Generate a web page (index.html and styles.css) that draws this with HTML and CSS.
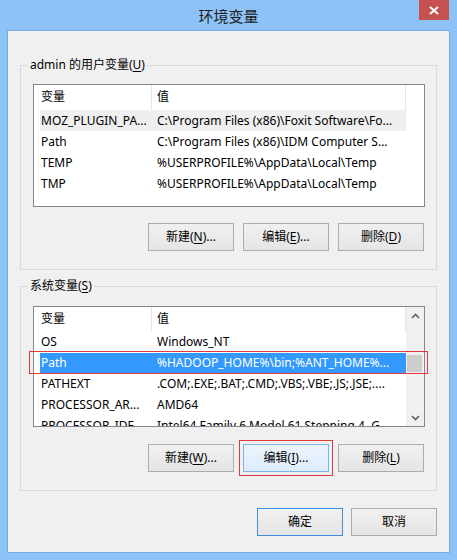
FILE: index.html
```html
<!DOCTYPE html>
<html lang="zh-CN">
<head>
<meta charset="utf-8">
<title>环境变量</title>
<link rel="stylesheet" href="styles.css">
</head>
<body>
<div class="window">
  <div class="titlebar">
    <span class="spacer"></span>
    <span class="title">环境变量</span>
    <span class="tb-right">
      <span class="close"><svg width="10" height="9" viewBox="0 0 10 9"><path d="M1 1 L9 8 M9 1 L1 8" stroke="#fff" stroke-width="2" fill="none"/></svg></span>
    </span>
  </div>
  <div class="client">
    <fieldset class="group">
      <legend>admin 的用户变量(<u>U</u>)</legend>
      <div class="listview lv-user">
        <div class="lv-main">
          <div class="lv-header">
            <div class="h1">变量</div>
            <div class="h2">值</div>
            <div class="hfill"></div>
          </div>
          <div class="lv-body">
            <div class="row hot"><span class="c1">MOZ_PLUGIN_PA...</span><span class="c2">C:\Program Files (x86)\Foxit Software\Fo...</span></div>
            <div class="row"><span class="c1">Path</span><span class="c2">C:\Program Files (x86)\IDM Computer S...</span></div>
            <div class="row"><span class="c1">TEMP</span><span class="c2">%USERPROFILE%\AppData\Local\Temp</span></div>
            <div class="row"><span class="c1">TMP</span><span class="c2">%USERPROFILE%\AppData\Local\Temp</span></div>
          </div>
        </div>
      </div>
      <div class="btnrow">
        <button class="btn">新建(<u>N</u>)...</button>
        <button class="btn">编辑(<u>E</u>)...</button>
        <button class="btn">删除(<u>D</u>)</button>
      </div>
    </fieldset>

    <fieldset class="group group-sys">
      <legend>系统变量(<u>S</u>)</legend>
      <div class="listview lv-sys">
        <div class="lv-main">
          <div class="lv-header">
            <div class="h1">变量</div>
            <div class="h2">值</div>
          </div>
          <div class="lv-body">
            <div class="row"><span class="c1">OS</span><span class="c2">Windows_NT</span></div>
            <div class="row selected"><span class="c1">Path</span><span class="c2">%HADOOP_HOME%\bin;%ANT_HOME%...</span></div>
            <div class="row"><span class="c1">PATHEXT</span><span class="c2">.COM;.EXE;.BAT;.CMD;.VBS;.VBE;.JS;.JSE;....</span></div>
            <div class="row"><span class="c1">PROCESSOR_AR...</span><span class="c2">AMD64</span></div>
            <div class="row"><span class="c1">PROCESSOR_IDE...</span><span class="c2">Intel64 Family 6 Model 61 Stepping 4, G...</span></div>
          </div>
        </div>
        <div class="scrollbar">
          <div class="sb-btn"><svg width="9" height="6" viewBox="0 0 9 6"><path d="M1 5 L4.5 1.5 L8 5" stroke="#606060" stroke-width="1.6" fill="none"/></svg></div>
          <div class="sb-track"><div class="sb-thumb"></div></div>
          <div class="sb-btn"><svg width="9" height="6" viewBox="0 0 9 6"><path d="M1 1 L4.5 4.5 L8 1" stroke="#606060" stroke-width="1.6" fill="none"/></svg></div>
        </div>
      </div>
      <div class="btnrow">
        <button class="btn">新建(<u>W</u>)...</button>
        <button class="btn btn-hot marked">编辑(<u>I</u>)...</button>
        <button class="btn">删除(<u>L</u>)</button>
      </div>
      <div class="mark-row"></div>
    </fieldset>

    <div class="dlg-buttons">
      <button class="btn btn-default">确定</button>
      <button class="btn">取消</button>
    </div>
  </div>
</div>
</body>
</html>
```

FILE: styles.css
```css
* { box-sizing: border-box; }
html, body { margin: 0; padding: 0; }
body {
  width: 457px;
  height: 560px;
  overflow: hidden;
  font-family: "Noto Sans", "Noto Sans CJK SC", sans-serif;
  font-size: 12px;
  color: #000;
}
.window {
  width: 457px;
  height: 560px;
  background: #8cc2f5;
  padding: 0 7px;
  display: flex;
  flex-direction: column;
}
.titlebar {
  height: 30px;
  display: grid;
  grid-template-columns: 1fr auto 1fr;
  margin: 0 -7px;
}
.title {
  font-family: "Noto Sans CJK SC", sans-serif;
  font-size: 15px;
  line-height: 31px;
  color: #1e1e1e;
}
.tb-right {
  display: flex;
  justify-content: flex-end;
  align-items: flex-start;
  padding-right: 8px;
}
.close {
  width: 30px;
  height: 20px;
  background: #c75050;
  display: flex;
  align-items: center;
  justify-content: center;
}
.client {
  width: 443px;
  height: 523px;
  border: 1px solid #74abe3;
  background: #f0f0f0;
  display: flex;
  flex-direction: column;
}
.group {
  position: relative;
  margin: 26px 0 0 12px;
  width: 417px;
  min-width: 0;
  border: 1px solid #d9d9d9;
  padding: 0 11px 18px 7px;
}
.group-sys { margin-top: 8px; }
.group legend {
  padding: 0 2px;
  line-height: 16px;
  font-size: 12px;
}
u { text-decoration: underline; text-underline-offset: 2px; }
.listview {
  margin: 11px 0 0 5px;
  width: 392px;
  height: 123px;
  border: 1px solid #828790;
  background: #fff;
  display: flex;
}
.lv-sys { margin-top: 12px; height: 121px; }
.lv-main {
  flex: 1;
  min-width: 0;
  display: flex;
  flex-direction: column;
  overflow: hidden;
}
.lv-header {
  height: 25px;
  flex: none;
  display: flex;
  line-height: 24px;
}
.lv-sys .lv-header { height: 24px; }
.h1 {
  width: 118px;
  padding-left: 7px;
  border-right: 1px solid #e5e5e5;
}
.h2 {
  width: 254px;
  padding-left: 5px;
  border-right: 1px solid #e5e5e5;
}
.hfill { flex: 1; }
.lv-body {
  flex: 1;
  overflow: hidden;
}
.row {
  margin-left: 6px;
  width: 366px;
  height: 21px;
  line-height: 21px;
  display: flex;
  white-space: nowrap;
}
.row .c1 {
  width: 112px;
  padding-left: 1px;
  overflow: hidden;
}
.row .c2 {
  width: 254px;
  padding-left: 5px;
  overflow: hidden;
}
.row.hot { background: #efefef; }
.row.selected {
  background: linear-gradient(#3399ff, #3399ff) 0 1px / 100% 20px no-repeat;
  color: #fff;
}
.scrollbar {
  width: 18px;
  flex: none;
  background: #f0f0f0;
  display: flex;
  flex-direction: column;
}
.sb-btn {
  height: 17px;
  display: flex;
  align-items: center;
  justify-content: center;
}
.sb-track { flex: 1; }
.sb-thumb {
  margin: 31px 0 0 1px;
  width: 15px;
  height: 17px;
  background: #cdcdcd;
}
/* annotation rectangle over the selected Path row */
.mark-row {
  position: absolute;
  z-index: 3;
  left: 8px;
  top: 57px;
  width: 399px;
  height: 23px;
  border: 1px solid #e0393b;
  pointer-events: none;
}
.btnrow {
  margin-top: 16px;
  display: flex;
  justify-content: flex-end;
  gap: 9px;
  padding-right: 1px;
}
.group-sys .btnrow { margin-top: 17px; }
.btn {
  width: 86px;
  height: 28px;
  border: 1px solid #acacac;
  background: linear-gradient(#f0f0f0, #e5e5e5);
  font-family: "Noto Sans", "Noto Sans CJK SC", sans-serif;
  font-size: 12px;
  color: #000;
  padding: 0;
  margin: 0;
  line-height: 26px;
}
.btn-hot {
  background: linear-gradient(#ecf4fc, #dcecfc);
  border-color: #7eb4ea;
}
.btn-default { border-color: #3c8ee0; }
.marked {
  outline: 1px solid #e0393b;
  outline-offset: 3px;
}
.dlg-buttons {
  margin-top: 17px;
  display: flex;
  justify-content: flex-end;
  gap: 8px;
  padding-right: 12px;
}
```
